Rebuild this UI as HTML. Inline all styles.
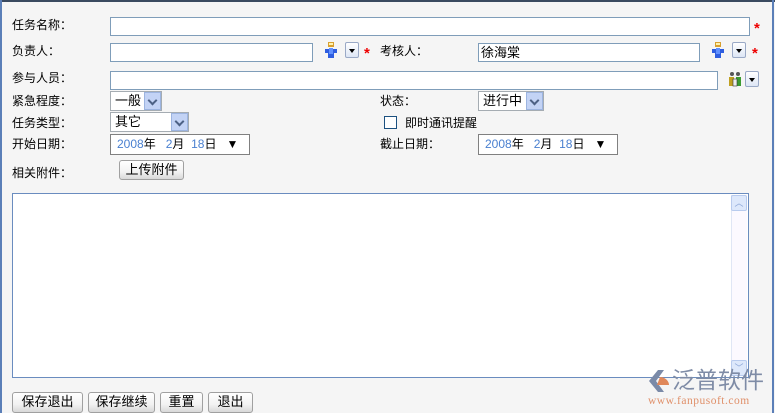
<!DOCTYPE html><html><head><meta charset="utf-8"><style>
*{margin:0;padding:0;box-sizing:border-box}
html,body{width:775px;height:413px;overflow:hidden}
body{background:#f5f5f5;position:relative;font-family:"Liberation Sans","Noto Sans CJK SC","WenQuanYi Zen Hei",sans-serif;font-size:12px;color:#000}
.a{position:absolute;white-space:nowrap}
.lb{position:absolute;font-size:12px;line-height:14px;white-space:nowrap}
.in{position:absolute;background:#fff;border:1px solid #7f9db9}
.sel{position:absolute;background:#fff;border:1px solid #a5acb2;font-size:13px;line-height:18px;padding-left:4px;white-space:nowrap}
.sel i{position:absolute;right:0;top:0;width:17px;height:18px;background:#c3d3f5;border:1px solid #9cb4e0}
.sel i:after{content:"";position:absolute;left:4px;top:4px;width:5px;height:5px;border-right:2px solid #4d6185;border-bottom:2px solid #4d6185;transform:rotate(45deg)}
.dd{position:absolute;width:14px;height:16px;border:1px solid #9aa9c6;border-radius:2px;background:linear-gradient(#fff,#dde6f5)}
.dd:after{content:"";position:absolute;left:3px;top:6px;border:3px solid transparent;border-top:4px solid #000}
.star{position:absolute;color:#e00;font-size:15px;font-weight:bold}
.usr{position:absolute;width:14px;height:16px}
.date{position:absolute;background:#fff;border:1px solid #808080;font-size:12px;line-height:18px;padding-left:6px;white-space:nowrap}
.date b{color:#4a80d0;font-weight:normal}
.btn{position:absolute;border:1px solid #a0a0a0;border-radius:3px;background:linear-gradient(#fff 0%,#f2f2f2 60%,#d8d8d8 100%);font-size:13px;text-align:center;line-height:18px;white-space:nowrap}
</style></head><body>
<div class="a" style="left:0;top:0;width:775px;height:2px;background:#3a4a60"></div>
<div class="a" style="left:0;top:0;width:2px;height:413px;background:#5b7fb8"></div>
<div class="a" style="left:772px;top:0;width:2px;height:413px;background:#5b7fb8"></div>

<div class="lb" style="left:12px;top:18px">任务名称：</div>
<div class="in" style="left:110px;top:17px;width:640px;height:19px"></div>
<div class="star" style="left:754px;top:20px">*</div>

<div class="lb" style="left:12px;top:44px">负责人：</div>
<div class="in" style="left:110px;top:43px;width:203px;height:19px"></div>
<svg class="usr" style="left:324px;top:42px" viewBox="0 0 14 16"><rect x="4" y="0" width="6" height="5" fill="#d8a030"/><rect x="5" y="1" width="4" height="2" fill="#fff3b0"/><path d="M1 7h12v4h-3v5H4v-5H1z" fill="#2f5ee0"/><rect x="5" y="6" width="4" height="6" fill="#6090ff"/></svg>
<div class="dd" style="left:345px;top:42px"></div>
<div class="star" style="left:364px;top:45px">*</div>
<div class="lb" style="left:380px;top:44px">考核人：</div>
<div class="in" style="left:478px;top:43px;width:222px;height:19px;font-size:13px;line-height:17px;padding-left:2px">徐海棠</div>
<svg class="usr" style="left:711px;top:42px" viewBox="0 0 14 16"><rect x="4" y="0" width="6" height="5" fill="#d8a030"/><rect x="5" y="1" width="4" height="2" fill="#fff3b0"/><path d="M1 7h12v4h-3v5H4v-5H1z" fill="#2f5ee0"/><rect x="5" y="6" width="4" height="6" fill="#6090ff"/></svg>
<div class="dd" style="left:732px;top:42px"></div>
<div class="star" style="left:752px;top:45px">*</div>

<div class="lb" style="left:12px;top:71px">参与人员：</div>
<div class="in" style="left:110px;top:71px;width:608px;height:19px"></div>
<svg class="usr" style="left:728px;top:71px" viewBox="0 0 14 16"><circle cx="4" cy="3" r="2" fill="#555"/><circle cx="10" cy="3" r="2" fill="#555"/><rect x="1" y="6" width="5" height="9" fill="#c0a020"/><rect x="8" y="6" width="5" height="9" fill="#3a9a30"/><rect x="5" y="8" width="4" height="7" fill="#eee" stroke="#333" stroke-width=".6"/></svg>
<div class="dd" style="left:745px;top:71px"></div>

<div class="lb" style="left:12px;top:94px">紧急程度：</div>
<div class="sel" style="left:110px;top:91px;width:52px;height:20px">一般<i></i></div>
<div class="lb" style="left:380px;top:94px">状态：</div>
<div class="sel" style="left:478px;top:91px;width:66px;height:20px">进行中<i></i></div>

<div class="lb" style="left:12px;top:116px">任务类型：</div>
<div class="sel" style="left:110px;top:112px;width:79px;height:20px">其它<i></i></div>
<div class="a" style="left:384px;top:116px;width:13px;height:13px;border:1px solid #1c5180;background:#fff"></div>
<div class="lb" style="left:405px;top:116px">即时通讯提醒</div>

<div class="lb" style="left:12px;top:137px">开始日期：</div>
<div class="date" style="left:110px;top:134px;width:140px;height:21px"><b>2008</b>年 &nbsp; <b>2</b>月 &nbsp;<b>18</b>日 &nbsp; ▼</div>
<div class="lb" style="left:380px;top:137px">截止日期：</div>
<div class="date" style="left:478px;top:134px;width:140px;height:21px"><b>2008</b>年 &nbsp; <b>2</b>月 &nbsp;<b>18</b>日 &nbsp; ▼</div>

<div class="lb" style="left:12px;top:166px">相关附件：</div>
<div class="btn" style="left:119px;top:160px;width:65px;height:20px">上传附件</div>

<div class="in" style="left:12px;top:193px;width:737px;height:185px;border-color:#6a8cbf"></div>
<div class="a" style="left:731px;top:195px;width:16px;height:181px;background:#fcf9ff;border-left:1px solid #e0e6f5"></div>
<div class="a" style="left:731px;top:195px;width:16px;height:16px;background:#dde8fb;border:1px solid #b8cbee;border-radius:2px;color:#8aa4d6;font-size:9px;text-align:center;line-height:14px">︿</div>
<div class="a" style="left:731px;top:360px;width:16px;height:16px;background:#dde8fb;border:1px solid #b8cbee;border-radius:2px;color:#8aa4d6;font-size:9px;text-align:center;line-height:14px">﹀</div>

<svg class="a" style="left:646px;top:369px" width="26" height="24" viewBox="0 0 26 24"><path d="M12 1L3 12l9 11h6L10 12l8-11z" fill="#7a8aa8"/><path d="M14 8c5 0 9 4 9 8h-12z" fill="#e0885a"/></svg>
<div class="a" style="left:672px;top:366px;font-size:23px;line-height:28px;color:#7f8ca6">泛普软件</div>
<div class="a" style="left:648px;top:395px;font-family:'Liberation Serif',serif;font-size:11.5px;color:#e0906a;letter-spacing:.5px">www.fanpusoft.com</div>

<div class="btn" style="left:12px;top:392px;width:71px;height:21px">保存退出</div>
<div class="btn" style="left:88px;top:392px;width:67px;height:21px">保存继续</div>
<div class="btn" style="left:160px;top:392px;width:43px;height:21px">重置</div>
<div class="btn" style="left:208px;top:392px;width:45px;height:21px">退出</div>
</body></html>
